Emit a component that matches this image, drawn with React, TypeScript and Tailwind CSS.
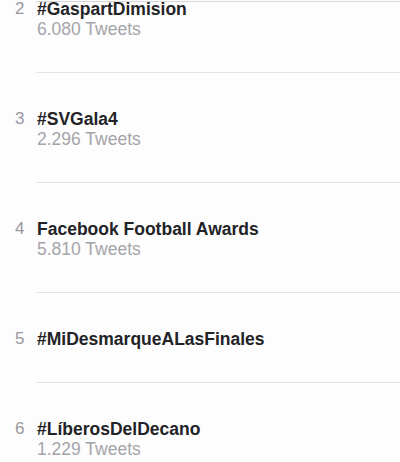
// Lista de tendencias (trending topics)

const trends = [
  { rank: 2, name: "#GaspartDimision", tweets: "6.080 Tweets" },
  { rank: 3, name: "#SVGala4", tweets: "2.296 Tweets" },
  { rank: 4, name: "Facebook Football Awards", tweets: "5.810 Tweets" },
  { rank: 5, name: "#MiDesmarqueALasFinales", tweets: null },
  { rank: 6, name: "#LíberosDelDecano", tweets: "1.229 Tweets" },
];

export default function App() {
  return (
    <div
      className="relative w-[400px] h-[462px] overflow-hidden bg-[#fefdfe]"
      style={{ fontFamily: '"Liberation Sans", Arial, sans-serif' }}
    >
      {/* línea superior */}
      <div className="absolute top-[1px] left-[36px] right-0 h-px bg-[#d6d6d8]" />

      <div className="relative -mt-px">
        {trends.map((t, i) => (
          <div key={t.rank} className="flex">
            <div className="w-[36px] shrink-0 pl-[15px]">
              <div
                className={`text-[17px] leading-[20px] text-[#98989d] ${i === 0 ? "pt-0" : "pt-[36px]"}`}
              >
                {t.rank}
              </div>
            </div>
            <div
              className={`flex-1 pl-px pb-[33px] ${i === 0 ? "pt-0" : "pt-[36px]"} ${
                i < trends.length - 1 ? "border-b border-[#e3e2e6]" : ""
              }`}
            >
              <div className="text-[17.5px] leading-[20px] font-bold text-[#222326]">{t.name}</div>
              {t.tweets && (
                <div className="text-[17.5px] leading-[20px] text-[#a4a4a9]">{t.tweets}</div>
              )}
            </div>
          </div>
        ))}
      </div>
    </div>
  );
}
